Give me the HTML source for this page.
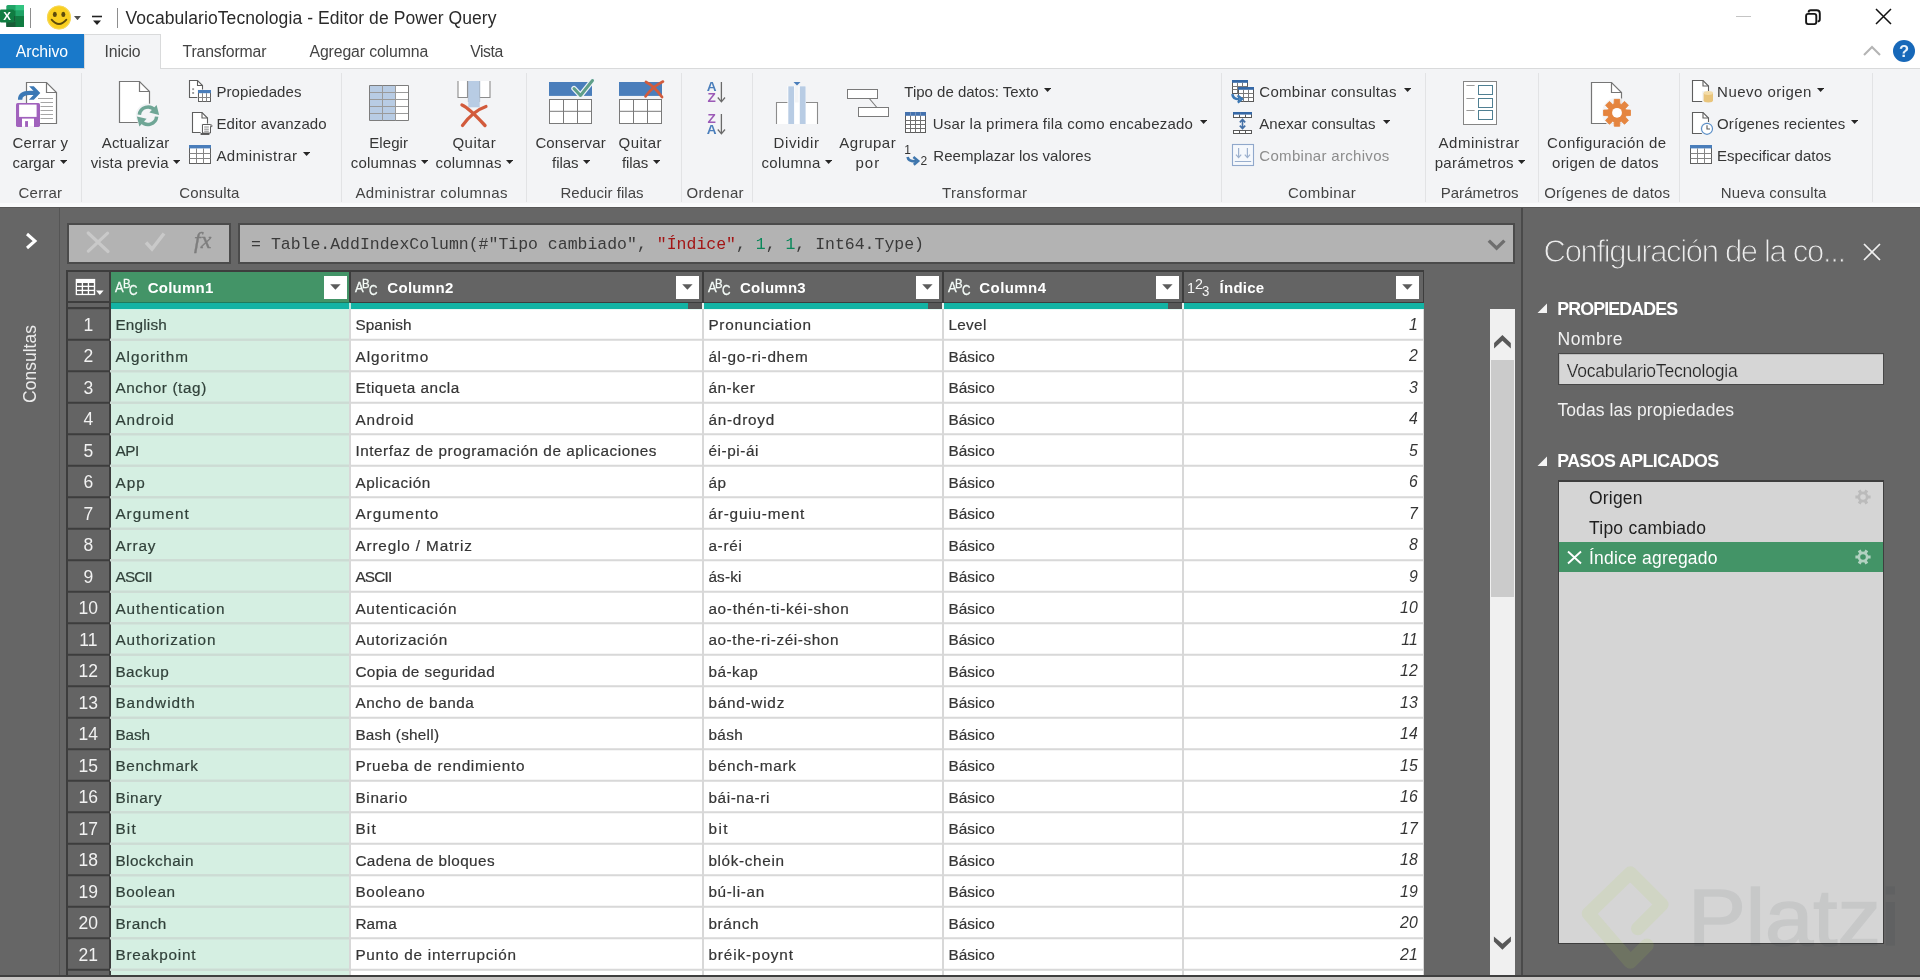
<!DOCTYPE html>
<html lang="es"><head><meta charset="utf-8"><title>VocabularioTecnologia - Editor de Power Query</title>
<style>
html,body{margin:0;padding:0;}
body{width:1920px;height:980px;overflow:hidden;position:relative;background:#666666;font-family:"Liberation Sans",sans-serif;}
#app{position:absolute;left:0;top:0;width:1920px;height:980px;overflow:hidden;will-change:transform;}
#app div,#app span,#app svg{position:absolute;}
#app span{white-space:nowrap;display:block;}
.m{font-family:"Liberation Mono","DejaVu Sans Mono",monospace;}
</style></head><body><div id="app">
<div style="left:0px;top:0px;width:1920px;height:34px;background:#ffffff;"></div>
<div style="left:0px;top:34px;width:1920px;height:34px;background:#ffffff;"></div>
<div style="left:0px;top:68px;width:1920px;height:139px;background:#f3f4f6;border-top:1px solid #d9dadb;box-sizing:border-box;"></div>
<div style="left:0px;top:207px;width:1920px;height:773px;background:#666666;"></div>
<div style="left:0px;top:203px;width:1920px;height:4px;background:#f9fafb;"></div>
<div style="left:0px;top:207px;width:1920px;height:1px;background:#575757;"></div>
<div style="left:59px;top:208px;width:1px;height:767px;background:#555555;"></div>
<div style="left:0px;top:975px;width:1920px;height:2px;background:#3f3f3f;"></div>
<div style="left:0px;top:977px;width:1920px;height:3px;background:#c9c7c5;"></div>
<div style="left:1521px;top:208px;width:2px;height:767px;background:#4a4a4a;"></div>
<span style="left:125.50px;top:10.19px;font-size:17.5px;line-height:17.5px;color:#2a2a2a;letter-spacing:0.075px;">VocabularioTecnologia - Editor de Power Query</span>
<svg style="left:0px;top:4px;" width="26" height="24" viewBox="0 0 26 24"><rect x="6.3" y="1" width="17.7" height="22" rx="1.5" fill="#21a366"/><rect x="15.5" y="1" width="8.5" height="5.5" fill="#33c481"/><rect x="15.5" y="6.5" width="8.5" height="5.5" fill="#21a366"/><rect x="15.5" y="12" width="8.5" height="5.5" fill="#107c41"/><rect x="6.3" y="12" width="9.2" height="5.5" fill="#185c37"/><rect x="6.3" y="17.5" width="17.7" height="5.5" fill="#185c37"/><rect x="15.5" y="17.5" width="8.5" height="5.5" fill="#107c41"/><rect x="6.3" y="6.5" width="9.2" height="5.5" fill="#107c41"/><rect x="0" y="5.5" width="14" height="13" rx="1" fill="#107c41"/><text x="7" y="16.3" font-family="Liberation Sans, sans-serif" font-weight="700" font-size="11.5" fill="#ffffff" text-anchor="middle">X</text></svg>
<div style="left:30px;top:8px;width:1px;height:20px;background:#8e8e8e;"></div>
<svg style="left:46px;top:5px;" width="26" height="26" viewBox="0 0 26 26"><circle cx="13" cy="12.5" r="11.7" fill="#f9cf20"/><circle cx="13" cy="12.5" r="11.5" fill="none" stroke="#f6d859" stroke-width="1.2"/><ellipse cx="8.8" cy="9.4" rx="2" ry="2.6" fill="#5d4b0c"/><ellipse cx="17.3" cy="9.4" rx="2" ry="2.6" fill="#5d4b0c"/><path d="M5.6 14.6 Q13 23.4 20.4 14.6" fill="none" stroke="#5d4b0c" stroke-width="1.8" stroke-linecap="round"/></svg>
<svg style="left:73.8px;top:16.1px;" width="7" height="4.2" viewBox="0 0 7 4.2"><path d="M0 0 L7 0 L3.5 4.2 Z" fill="#505050"/></svg>
<svg style="left:90.6px;top:14.9px;" width="12" height="12" viewBox="0 0 12 12"><path d="M1 1.5 H11" stroke="#222" stroke-width="1.6"/><path d="M2 5.5 L10 5.5 L6 10 Z" fill="#222"/></svg>
<div style="left:117px;top:8px;width:1px;height:20px;background:#8e8e8e;"></div>
<div style="left:1736px;top:16px;width:15px;height:1px;background:#c4c4c4;"></div>
<svg style="left:1803px;top:7.6px;" width="19" height="19" viewBox="0 0 19 19"><path d="M5.6 4.4 Q5.6 2.2 7.8 2.2 H13.6 Q16.8 2.2 16.8 5.4 V11.2 Q16.8 13.4 14.6 13.4" fill="none" stroke="#151515" stroke-width="1.9"/><rect x="3.1" y="5.9" width="10.2" height="10.2" rx="2" fill="#fff" stroke="#151515" stroke-width="1.9"/></svg>
<svg style="left:1874px;top:7px;" width="20" height="20" viewBox="0 0 20 20"><path d="M2 2 L17 17 M17 2 L2 17" fill="none" stroke="#111" stroke-width="1.5"/></svg>
<svg style="left:1862px;top:44px;" width="20" height="12" viewBox="0 0 20 12"><path d="M2 11 L10 3 L18 11" fill="none" stroke="#b4b4b4" stroke-width="2.1"/></svg>
<svg style="left:1892px;top:39px;" width="24" height="24" viewBox="0 0 24 24"><circle cx="12" cy="12" r="11" fill="#1768b9"/><text x="12" y="17.8" font-family="Liberation Sans, sans-serif" font-size="16.5" font-weight="700" fill="#e8f2fb" text-anchor="middle">?</text></svg>
<div style="left:0px;top:34px;width:84px;height:34px;background:#1979ca;"></div>
<div style="left:84px;top:34px;width:77px;height:35px;background:#f3f4f6;border:1px solid #d9dadb;border-bottom:none;box-sizing:border-box;"></div>
<span style="left:15.80px;top:43.63px;font-size:15.8px;line-height:15.8px;color:#ffffff;letter-spacing:-0.064px;">Archivo</span>
<span style="left:104.60px;top:43.63px;font-size:15.8px;line-height:15.8px;color:#444444;letter-spacing:-0.177px;">Inicio</span>
<span style="left:182.50px;top:43.63px;font-size:15.8px;line-height:15.8px;color:#444444;letter-spacing:-0.145px;">Transformar</span>
<span style="left:309.50px;top:43.63px;font-size:15.8px;line-height:15.8px;color:#444444;letter-spacing:-0.116px;">Agregar columna</span>
<span style="left:470.20px;top:43.63px;font-size:15.8px;line-height:15.8px;color:#444444;letter-spacing:-0.460px;">Vista</span>
<div style="left:81px;top:73px;width:1px;height:129px;background:#e2e3e5;"></div>
<div style="left:341px;top:73px;width:1px;height:129px;background:#e2e3e5;"></div>
<div style="left:526px;top:73px;width:1px;height:129px;background:#e2e3e5;"></div>
<div style="left:681px;top:73px;width:1px;height:129px;background:#e2e3e5;"></div>
<div style="left:752px;top:73px;width:1px;height:129px;background:#e2e3e5;"></div>
<div style="left:1221px;top:73px;width:1px;height:129px;background:#e2e3e5;"></div>
<div style="left:1425px;top:73px;width:1px;height:129px;background:#e2e3e5;"></div>
<div style="left:1538px;top:73px;width:1px;height:129px;background:#e2e3e5;"></div>
<div style="left:1679px;top:73px;width:1px;height:129px;background:#e2e3e5;"></div>
<div style="left:1872px;top:73px;width:1px;height:129px;background:#e2e3e5;"></div>
<span style="left:18.60px;top:184.60px;font-size:15px;line-height:15px;color:#444444;letter-spacing:0.179px;">Cerrar</span>
<span style="left:179.30px;top:184.60px;font-size:15px;line-height:15px;color:#444444;letter-spacing:0.114px;">Consulta</span>
<span style="left:355.40px;top:184.60px;font-size:15px;line-height:15px;color:#444444;letter-spacing:0.410px;">Administrar columnas</span>
<span style="left:560.40px;top:184.60px;font-size:15px;line-height:15px;color:#444444;letter-spacing:0.056px;">Reducir filas</span>
<span style="left:686.40px;top:184.60px;font-size:15px;line-height:15px;color:#444444;letter-spacing:0.362px;">Ordenar</span>
<span style="left:942.00px;top:184.60px;font-size:15px;line-height:15px;color:#444444;letter-spacing:0.377px;">Transformar</span>
<span style="left:1287.90px;top:184.60px;font-size:15px;line-height:15px;color:#444444;letter-spacing:0.396px;">Combinar</span>
<span style="left:1440.70px;top:184.60px;font-size:15px;line-height:15px;color:#444444;letter-spacing:0.041px;">Parámetros</span>
<span style="left:1544.30px;top:184.60px;font-size:15px;line-height:15px;color:#444444;letter-spacing:0.143px;">Orígenes de datos</span>
<span style="left:1720.70px;top:184.60px;font-size:15px;line-height:15px;color:#444444;letter-spacing:0.177px;">Nueva consulta</span>
<span style="left:12.60px;top:134.60px;font-size:15px;line-height:15px;color:#363636;letter-spacing:0.161px;">Cerrar y</span>
<span style="left:12.60px;top:155.30px;font-size:15px;line-height:15px;color:#363636;letter-spacing:-0.024px;">cargar</span>
<svg style="left:60px;top:160.2px;" width="7.2" height="4" viewBox="0 0 7.2 4"><path d="M0 0 L7.2 0 L3.6 4 Z" fill="#262626"/></svg>
<span style="left:101.70px;top:134.60px;font-size:15px;line-height:15px;color:#363636;letter-spacing:0.193px;">Actualizar</span>
<span style="left:90.70px;top:155.30px;font-size:15px;line-height:15px;color:#363636;letter-spacing:0.185px;">vista previa</span>
<svg style="left:173.1px;top:160.2px;" width="7.2" height="4" viewBox="0 0 7.2 4"><path d="M0 0 L7.2 0 L3.6 4 Z" fill="#262626"/></svg>
<span style="left:369.30px;top:134.60px;font-size:15px;line-height:15px;color:#363636;letter-spacing:0.050px;">Elegir</span>
<span style="left:350.70px;top:155.30px;font-size:15px;line-height:15px;color:#363636;letter-spacing:0.214px;">columnas</span>
<svg style="left:421px;top:160.2px;" width="7.2" height="4" viewBox="0 0 7.2 4"><path d="M0 0 L7.2 0 L3.6 4 Z" fill="#262626"/></svg>
<span style="left:452.40px;top:134.60px;font-size:15px;line-height:15px;color:#363636;letter-spacing:0.490px;">Quitar</span>
<span style="left:435.40px;top:155.30px;font-size:15px;line-height:15px;color:#363636;letter-spacing:0.257px;">columnas</span>
<svg style="left:505.8px;top:160.2px;" width="7.2" height="4" viewBox="0 0 7.2 4"><path d="M0 0 L7.2 0 L3.6 4 Z" fill="#262626"/></svg>
<span style="left:535.40px;top:134.60px;font-size:15px;line-height:15px;color:#363636;letter-spacing:0.138px;">Conservar</span>
<span style="left:552.10px;top:155.30px;font-size:15px;line-height:15px;color:#363636;letter-spacing:-0.044px;">filas</span>
<svg style="left:583.3px;top:160.2px;" width="7.2" height="4" viewBox="0 0 7.2 4"><path d="M0 0 L7.2 0 L3.6 4 Z" fill="#262626"/></svg>
<span style="left:618.60px;top:134.60px;font-size:15px;line-height:15px;color:#363636;letter-spacing:0.390px;">Quitar</span>
<span style="left:621.90px;top:155.30px;font-size:15px;line-height:15px;color:#363636;letter-spacing:-0.069px;">filas</span>
<svg style="left:653.1px;top:160.2px;" width="7.2" height="4" viewBox="0 0 7.2 4"><path d="M0 0 L7.2 0 L3.6 4 Z" fill="#262626"/></svg>
<span style="left:773.60px;top:134.60px;font-size:15px;line-height:15px;color:#363636;letter-spacing:0.605px;">Dividir</span>
<span style="left:761.40px;top:155.30px;font-size:15px;line-height:15px;color:#363636;letter-spacing:0.384px;">columna</span>
<svg style="left:825px;top:160.2px;" width="7.2" height="4" viewBox="0 0 7.2 4"><path d="M0 0 L7.2 0 L3.6 4 Z" fill="#262626"/></svg>
<span style="left:839.30px;top:134.60px;font-size:15px;line-height:15px;color:#363636;letter-spacing:0.505px;">Agrupar</span>
<span style="left:855.40px;top:155.30px;font-size:15px;line-height:15px;color:#363636;letter-spacing:1.110px;">por</span>
<span style="left:1438.60px;top:134.60px;font-size:15px;line-height:15px;color:#363636;letter-spacing:0.485px;">Administrar</span>
<span style="left:1434.70px;top:155.30px;font-size:15px;line-height:15px;color:#363636;letter-spacing:0.337px;">parámetros</span>
<svg style="left:1517.9px;top:160.2px;" width="7.2" height="4" viewBox="0 0 7.2 4"><path d="M0 0 L7.2 0 L3.6 4 Z" fill="#262626"/></svg>
<span style="left:1547.10px;top:134.60px;font-size:15px;line-height:15px;color:#363636;letter-spacing:0.366px;">Configuración de</span>
<span style="left:1552.10px;top:155.30px;font-size:15px;line-height:15px;color:#363636;letter-spacing:0.220px;">origen de datos</span>
<span style="left:216.40px;top:83.90px;font-size:15px;line-height:15px;color:#363636;letter-spacing:0.077px;">Propiedades</span>
<span style="left:216.40px;top:116.00px;font-size:15px;line-height:15px;color:#363636;letter-spacing:0.135px;">Editor avanzado</span>
<span style="left:216.40px;top:147.90px;font-size:15px;line-height:15px;color:#363636;letter-spacing:0.475px;">Administrar</span>
<svg style="left:302.6px;top:152.0px;" width="7.2" height="4" viewBox="0 0 7.2 4"><path d="M0 0 L7.2 0 L3.6 4 Z" fill="#262626"/></svg>
<span style="left:904.30px;top:83.90px;font-size:15px;line-height:15px;color:#363636;">Tipo de datos: Texto</span>
<svg style="left:1043.7px;top:88.0px;" width="7.2" height="4" viewBox="0 0 7.2 4"><path d="M0 0 L7.2 0 L3.6 4 Z" fill="#262626"/></svg>
<span style="left:932.70px;top:116.00px;font-size:15px;line-height:15px;color:#363636;letter-spacing:0.216px;">Usar la primera fila como encabezado</span>
<svg style="left:1200px;top:120.1px;" width="7.2" height="4" viewBox="0 0 7.2 4"><path d="M0 0 L7.2 0 L3.6 4 Z" fill="#262626"/></svg>
<span style="left:933.30px;top:147.90px;font-size:15px;line-height:15px;color:#363636;letter-spacing:0.055px;">Reemplazar los valores</span>
<span style="left:1259.30px;top:83.90px;font-size:15px;line-height:15px;color:#363636;letter-spacing:0.267px;">Combinar consultas</span>
<svg style="left:1403.8px;top:88.0px;" width="7.2" height="4" viewBox="0 0 7.2 4"><path d="M0 0 L7.2 0 L3.6 4 Z" fill="#262626"/></svg>
<span style="left:1259.30px;top:116.00px;font-size:15px;line-height:15px;color:#363636;letter-spacing:0.069px;">Anexar consultas</span>
<svg style="left:1382.8px;top:120.1px;" width="7.2" height="4" viewBox="0 0 7.2 4"><path d="M0 0 L7.2 0 L3.6 4 Z" fill="#262626"/></svg>
<span style="left:1259.30px;top:147.90px;font-size:15px;line-height:15px;color:#8c8c8c;letter-spacing:0.309px;">Combinar archivos</span>
<span style="left:1717.10px;top:83.90px;font-size:15px;line-height:15px;color:#363636;letter-spacing:0.461px;">Nuevo origen</span>
<svg style="left:1817px;top:88.0px;" width="7.2" height="4" viewBox="0 0 7.2 4"><path d="M0 0 L7.2 0 L3.6 4 Z" fill="#262626"/></svg>
<span style="left:1717.10px;top:116.00px;font-size:15px;line-height:15px;color:#363636;letter-spacing:0.086px;">Orígenes recientes</span>
<svg style="left:1851.2px;top:120.1px;" width="7.2" height="4" viewBox="0 0 7.2 4"><path d="M0 0 L7.2 0 L3.6 4 Z" fill="#262626"/></svg>
<span style="left:1717.10px;top:147.90px;font-size:15px;line-height:15px;color:#363636;">Especificar datos</span>
<svg style="left:14px;top:80px;" width="46" height="48" viewBox="0 0 46 48"><path d="M12.5 2.5 H32.5 L42.5 12.5 V43.5 H12.5 Z" fill="#ffffff" stroke="#767676" stroke-width="1.2"/><path d="M32.5 2.5 V12.5 H42.5" fill="none" stroke="#767676" stroke-width="1.2"/><path d="M24 18.5 H39" stroke="#a6a6a6" stroke-width="1"/><path d="M26.5 22.5 H39" stroke="#a6a6a6" stroke-width="1"/><path d="M26.5 26.5 H39" stroke="#a6a6a6" stroke-width="1"/><path d="M26.5 30.5 H39" stroke="#a6a6a6" stroke-width="1"/><path d="M26.5 34.5 H39" stroke="#a6a6a6" stroke-width="1"/><path d="M26.5 38.5 H39" stroke="#a6a6a6" stroke-width="1"/><path d="M6.1 19.7 Q6.1 12.9 16 12.9 H22" fill="none" stroke="#3b78b5" stroke-width="4.3"/><polygon points="15.1,6.3 19.8,6.3 26.3,12.9 19.8,19.7 14.9,19.7 21.4,12.9" fill="#3b78b5"/><rect x="2" y="22.9" width="24" height="24" rx="1.6" fill="#a162bd"/><rect x="5.1" y="24.6" width="17.5" height="12.3" fill="#ffffff"/><rect x="8" y="38.6" width="12" height="8.3" fill="#ffffff"/><rect x="11.1" y="41.1" width="2.9" height="5.8" fill="#a162bd"/></svg>
<svg style="left:118px;top:80px;" width="46" height="48" viewBox="0 0 46 48"><path d="M1.5 1.5 H21.5 L31.5 11.5 V42.5 H1.5 Z" fill="#ffffff" stroke="#767676" stroke-width="1.2"/><path d="M21.5 1.5 V11.5 H31.5" fill="none" stroke="#767676" stroke-width="1.2"/><circle cx="30" cy="35.7" r="12.3" fill="#f3f4f6"/><path d="M21.35 34.79 A8.7 8.7 0 0 1 36.86 30.34" fill="none" stroke="#6fa696" stroke-width="3.5"/><path d="M38.65 36.61 A8.7 8.7 0 0 1 23.14 41.06" fill="none" stroke="#6fa696" stroke-width="3.5"/><path d="M38.6 24.9 L41.1 34.9 L31.4 32.6 Z" fill="#6fa696"/><path d="M21.4 46.5 L18.9 36.5 L28.6 38.8 Z" fill="#6fa696"/></svg>
<svg style="left:188px;top:79px;" width="25" height="25" viewBox="0 0 25 25"><path d="M1.5 1.5 H9.5 L14.5 6.5 V18.5 H1.5 Z" fill="#ffffff" stroke="#5e5e5e" stroke-width="1.1"/><path d="M9.5 1.5 V6.5 H14.5" fill="none" stroke="#5e5e5e" stroke-width="1.1"/><rect x="4.2" y="9.2" width="1.9" height="1.9" fill="#9a9a9a"/><rect x="4.2" y="13" width="1.9" height="1.9" fill="#9a9a9a"/><rect x="9.4" y="10.5" width="14.6" height="13" fill="#f3f4f6"/><rect x="10.5" y="11.5" width="12" height="11" fill="#ffffff" stroke="#606060" stroke-width="1"/><rect x="10.0" y="11.0" width="13" height="3.2" fill="#4a7ebb"/><path d="M14.5 14.2 V22.5" stroke="#858585" stroke-width="1"/><path d="M18.5 14.2 V22.5" stroke="#858585" stroke-width="1"/><path d="M10.5 18.5 H22.5" stroke="#858585" stroke-width="1"/></svg>
<svg style="left:191px;top:111px;" width="24" height="25" viewBox="0 0 24 25"><path d="M1.5 1.5 H11.0 L16.5 7.0 V21.5 H1.5 Z" fill="#ffffff" stroke="#5e5e5e" stroke-width="1.1"/><path d="M11.0 1.5 V7.0 H16.5" fill="none" stroke="#5e5e5e" stroke-width="1.1"/><rect x="9.6" y="12.6" width="12.4" height="11.8" fill="#f3f4f6"/><path d="M11.5 13.5 H19.5 V22 H11.5 Z" fill="#ffffff" stroke="#5e5e5e" stroke-width="1"/><path d="M13.2 16 H17.8 M13.2 18.2 H17.8 M13.2 20.2 H17.8" stroke="#7a7a7a" stroke-width="0.9"/><path d="M9.6 23 H18.4" stroke="#4e4e4e" stroke-width="1.8"/><path d="M19.5 13.5 Q21.4 13.6 21 15.6 L19.5 15.6" fill="#ffffff" stroke="#5e5e5e" stroke-width="0.9"/></svg>
<svg style="left:188px;top:144px;" width="24" height="21" viewBox="0 0 24 21"><rect x="1.5" y="1.5" width="21" height="18" fill="#ffffff" stroke="#606060" stroke-width="1"/><rect x="1.0" y="1.0" width="22" height="3.4" fill="#4a7ebb"/><path d="M8.5 4.4 V19.5" stroke="#858585" stroke-width="1"/><path d="M15.5 4.4 V19.5" stroke="#858585" stroke-width="1"/><path d="M1.5 9.5 H22.5" stroke="#858585" stroke-width="1"/><path d="M1.5 14.5 H22.5" stroke="#858585" stroke-width="1"/></svg>
<svg style="left:1689px;top:144px;" width="24" height="21" viewBox="0 0 24 21"><rect x="1.5" y="1.5" width="21" height="18" fill="#ffffff" stroke="#606060" stroke-width="1"/><rect x="1.0" y="1.0" width="22" height="3.4" fill="#4a7ebb"/><path d="M8.5 4.4 V19.5" stroke="#858585" stroke-width="1"/><path d="M15.5 4.4 V19.5" stroke="#858585" stroke-width="1"/><path d="M1.5 9.5 H22.5" stroke="#858585" stroke-width="1"/><path d="M1.5 14.5 H22.5" stroke="#858585" stroke-width="1"/></svg>
<svg style="left:368px;top:84px;" width="42" height="38" viewBox="0 0 42 38"><rect x="1.5" y="1.5" width="39" height="35" fill="#ffffff"/><rect x="1.5" y="1.5" width="26" height="35" fill="#b8cce4"/><path d="M1.5 1.5 H40.5" stroke="#7d7d7d" stroke-width="1"/><path d="M1.5 8.5 H40.5" stroke="#9a9a9a" stroke-width="1"/><path d="M1.5 15.5 H40.5" stroke="#9a9a9a" stroke-width="1"/><path d="M1.5 22.5 H40.5" stroke="#9a9a9a" stroke-width="1"/><path d="M1.5 29.5 H40.5" stroke="#9a9a9a" stroke-width="1"/><path d="M1.5 36.5 H40.5" stroke="#7d7d7d" stroke-width="1"/><path d="M1.5 1.5 V36.5" stroke="#7d7d7d" stroke-width="1"/><path d="M14.5 1.5 V36.5" stroke="#9a9a9a" stroke-width="1"/><path d="M27.5 1.5 V36.5" stroke="#9a9a9a" stroke-width="1"/><path d="M40.5 1.5 V36.5" stroke="#7d7d7d" stroke-width="1"/></svg>
<svg style="left:456px;top:80px;" width="38" height="48" viewBox="0 0 38 48"><path d="M2 1 V17.5 H11.5 V1 M23.5 1 V17.5 H34 V1" fill="#ffffff" stroke="#8c8c8c" stroke-width="1.1"/><rect x="12.3" y="1" width="11.4" height="26.3" fill="#b8cce4"/><path d="M12.3 1 V22 M23.7 1 V22" stroke="#a9b9cc" stroke-width="0.8"/><path d="M6 25 Q13 28 29 45.5" fill="none" stroke="#d25b3c" stroke-width="3.4" stroke-linecap="round"/><path d="M30 26.5 Q17 31 6.5 45.5" fill="none" stroke="#d25b3c" stroke-width="3.2" stroke-linecap="round"/></svg>
<svg style="left:548px;top:77px;" width="48" height="49" viewBox="0 0 48 49"><rect x="1" y="5" width="43" height="13.9" fill="#4a7ebb"/><rect x="1.5" y="22.5" width="42" height="24" fill="#ffffff" stroke="#7a7a7a" stroke-width="1"/><path d="M15.5 22.5 V46.5 M29.5 22.5 V46.5 M1.5 34.3 H43.5" stroke="#7a7a7a" stroke-width="1"/><path d="M26 11.5 L32.5 18.5 L44.5 3.5" fill="none" stroke="#eef3f8" stroke-width="5.4" stroke-linecap="round" stroke-linejoin="round"/><path d="M26 11.5 L32.5 18.5 L44.5 3.5" fill="none" stroke="#5f9f88" stroke-width="3" stroke-linecap="round" stroke-linejoin="round"/></svg>
<svg style="left:618px;top:77px;" width="48" height="49" viewBox="0 0 48 49"><rect x="1" y="5" width="43" height="13.9" fill="#4a7ebb"/><rect x="1.5" y="22.5" width="42" height="24" fill="#ffffff" stroke="#7a7a7a" stroke-width="1"/><path d="M15.5 22.5 V46.5 M29.5 22.5 V46.5 M1.5 34.3 H43.5" stroke="#7a7a7a" stroke-width="1"/><path d="M28 5 Q36 9 44 20" fill="none" stroke="#d25b3c" stroke-width="2.8" stroke-linecap="round"/><path d="M45 4.5 Q34 10 27.5 19.5" fill="none" stroke="#d25b3c" stroke-width="2.6" stroke-linecap="round"/></svg>
<svg style="left:706px;top:79.5px;" width="22" height="24" viewBox="0 0 22 24"><text x="5.6" y="11" font-family="Liberation Sans, sans-serif" font-weight="700" font-size="13.6" fill="#4a7ebb" text-anchor="middle">A</text><text x="5.6" y="22" font-family="Liberation Sans, sans-serif" font-weight="700" font-size="13.6" fill="#9b59b6" text-anchor="middle">Z</text><path d="M15.4 2 V21.5 M11.8 17.5 L15.4 21.8 L19 17.5" fill="none" stroke="#6a6a6a" stroke-width="1.3"/></svg>
<svg style="left:706px;top:111.5px;" width="22" height="24" viewBox="0 0 22 24"><text x="5.6" y="11" font-family="Liberation Sans, sans-serif" font-weight="700" font-size="13.6" fill="#9b59b6" text-anchor="middle">Z</text><text x="5.6" y="22" font-family="Liberation Sans, sans-serif" font-weight="700" font-size="13.6" fill="#4a7ebb" text-anchor="middle">A</text><path d="M15.4 2 V21.5 M11.8 17.5 L15.4 21.8 L19 17.5" fill="none" stroke="#6a6a6a" stroke-width="1.3"/></svg>
<svg style="left:774px;top:80px;" width="46" height="46" viewBox="0 0 46 46"><rect x="2.5" y="22.5" width="41" height="21.5" fill="#ffffff"/><path d="M2.5 44 V22.5 H13.8 M32 22.5 H43.5 V44" fill="none" stroke="#8c8c8c" stroke-width="1.1"/><rect x="13.5" y="6" width="7.4" height="38" fill="#ffffff"/><rect x="24.6" y="6" width="7.4" height="38" fill="#ffffff"/><rect x="14.3" y="6.3" width="5.8" height="37.7" fill="#b8cce4"/><rect x="25.8" y="6.3" width="5.8" height="37.7" fill="#b8cce4"/><path d="M19.5 2 H26.5 L23 5.6 Z" fill="#4a7ebb"/></svg>
<svg style="left:845px;top:86px;" width="46" height="34" viewBox="0 0 46 34"><rect x="2.5" y="3.5" width="30" height="9" fill="#ffffff" stroke="#7a7a7a" stroke-width="1"/><rect x="13.5" y="21.5" width="30" height="9" fill="#ffffff" stroke="#7a7a7a" stroke-width="1"/><path d="M24.3 12.5 L31.9 21.5" stroke="#7a7a7a" stroke-width="1.1"/></svg>
<svg style="left:904px;top:111px;" width="24" height="23" viewBox="0 0 24 23"><rect x="1.5" y="1.5" width="20" height="20" fill="#ffffff" stroke="#5c5c5c" stroke-width="1"/><rect x="1" y="1" width="21" height="3.8" fill="#4472ae"/><path d="M6.5 4.8 V21.5" stroke="#707070" stroke-width="1"/><path d="M6.5 1.2 V4.2" stroke="#7f9cc6" stroke-width="0.9"/><path d="M11.5 4.8 V21.5" stroke="#707070" stroke-width="1"/><path d="M11.5 1.2 V4.2" stroke="#7f9cc6" stroke-width="0.9"/><path d="M16.5 4.8 V21.5" stroke="#707070" stroke-width="1"/><path d="M16.5 1.2 V4.2" stroke="#7f9cc6" stroke-width="0.9"/><path d="M1.5 9.5 H21.5" stroke="#707070" stroke-width="1"/><path d="M1.5 13.5 H21.5" stroke="#707070" stroke-width="1"/><path d="M1.5 17.5 H21.5" stroke="#707070" stroke-width="1"/></svg>
<svg style="left:903px;top:144px;" width="26" height="24" viewBox="0 0 26 24"><text x="1.2" y="9.7" font-family="Liberation Sans, sans-serif" font-size="12" fill="#333333">1</text><text x="17.5" y="20.8" font-family="Liberation Sans, sans-serif" font-size="12" fill="#333333">2</text><path d="M4.6 13 Q5.6 18 13.6 17.2" fill="none" stroke="#3f76ad" stroke-width="2.7"/><path d="M10.4 13 L15.2 17 L10.8 20.8" fill="none" stroke="#3f76ad" stroke-width="2.5"/></svg>
<svg style="left:1230px;top:79px;" width="25" height="26" viewBox="0 0 25 26"><rect x="2.5" y="1.5" width="15" height="13" fill="#ffffff" stroke="#585858" stroke-width="1"/><rect x="2.0" y="1.0" width="16" height="2.8" fill="#3568a6"/><path d="M7.5 3.8 V14.5" stroke="#7a7a7a" stroke-width="1"/><path d="M12.5 3.8 V14.5" stroke="#7a7a7a" stroke-width="1"/><path d="M2.5 7.5 H17.5" stroke="#7a7a7a" stroke-width="1"/><path d="M2.5 10.5 H17.5" stroke="#7a7a7a" stroke-width="1"/><rect x="8.5" y="8.5" width="15" height="14" fill="#ffffff" stroke="#585858" stroke-width="1"/><rect x="8.0" y="8.0" width="16" height="2.8" fill="#3568a6"/><path d="M13.5 10.8 V22.5" stroke="#7a7a7a" stroke-width="1"/><path d="M18.5 10.8 V22.5" stroke="#7a7a7a" stroke-width="1"/><path d="M8.5 14.5 H23.5" stroke="#7a7a7a" stroke-width="1"/><path d="M8.5 18.5 H23.5" stroke="#7a7a7a" stroke-width="1"/><rect x="0" y="15.2" width="8" height="10" fill="#f3f4f6"/><path d="M2.4 15.2 Q3 20.6 9.8 20.2" fill="none" stroke="#3b78b5" stroke-width="2.6"/><path d="M7.6 16.4 L12 20.1 L7.8 23.7" fill="none" stroke="#3b78b5" stroke-width="2.3"/></svg>
<svg style="left:1231px;top:111px;" width="24" height="24" viewBox="0 0 24 24"><rect x="2.5" y="1.5" width="18" height="5" fill="#ffffff" stroke="#585858" stroke-width="1"/><rect x="2" y="1" width="19" height="2.6" fill="#3568a6"/><path d="M8.5 3.6 V6.5 M14.5 3.6 V6.5" stroke="#585858" stroke-width="1"/><rect x="2.5" y="19.5" width="18" height="3" fill="#ffffff" stroke="#585858" stroke-width="1"/><path d="M8.5 19.5 V22.5 M14.5 19.5 V22.5" stroke="#585858" stroke-width="1"/><path d="M11.5 9 V17 M8.8 11.4 L11.5 8.4 L14.2 11.4 M8.8 14.6 L11.5 17.6 L14.2 14.6" fill="none" stroke="#4470a6" stroke-width="1.6"/></svg>
<svg style="left:1231px;top:143px;" width="24" height="24" viewBox="0 0 24 24"><rect x="1.5" y="1.5" width="21" height="21" fill="#f5f8fc" stroke="#90a8cb" stroke-width="1.1"/><path d="M3.8 18.5 H20.2" stroke="#98aecd" stroke-width="1"/><path d="M7.6 5 V14.4 M5 11.6 L7.6 14.6 L10.2 11.6 M16.4 5 V14.4 M13.8 11.6 L16.4 14.6 L19 11.6" fill="none" stroke="#9db1ce" stroke-width="1.2"/></svg>
<svg style="left:1462px;top:80px;" width="37" height="46" viewBox="0 0 37 46"><rect x="1.5" y="1.5" width="33" height="43" fill="#ffffff" stroke="#858585" stroke-width="1"/><rect x="16.5" y="5.5" width="14" height="9" fill="#ffffff" stroke="#4f7f92" stroke-width="1"/><path d="M4.4 5.5 H12.6" stroke="#9a9a9a" stroke-width="1"/><rect x="16.5" y="18.5" width="14" height="9" fill="#ffffff" stroke="#4f7f92" stroke-width="1"/><path d="M4.4 18.5 H12.6" stroke="#9a9a9a" stroke-width="1"/><rect x="16.5" y="30.5" width="14" height="9" fill="#ffffff" stroke="#4f7f92" stroke-width="1"/><path d="M4.4 30.5 H12.6" stroke="#9a9a9a" stroke-width="1"/></svg>
<svg style="left:1590px;top:80px;" width="44" height="48" viewBox="0 0 44 48"><path d="M1.5 2.5 H21.5 L31.5 12.5 V43.5 H1.5 Z" fill="#ffffff" stroke="#767676" stroke-width="1.2"/><path d="M21.5 2.5 V12.5 H31.5" fill="none" stroke="#767676" stroke-width="1.2"/><circle cx="27" cy="32.8" r="15" fill="#f3f4f6" opacity="0.9"/><polygon points="24.28,19.37 29.72,19.37 29.87,23.85 31.30,24.44 34.57,21.38 38.42,25.23 35.36,28.50 35.95,29.93 40.43,30.08 40.43,35.52 35.95,35.67 35.36,37.10 38.42,40.37 34.57,44.22 31.30,41.16 29.87,41.75 29.72,46.23 24.28,46.23 24.13,41.75 22.70,41.16 19.43,44.22 15.58,40.37 18.64,37.10 18.05,35.67 13.57,35.52 13.57,30.08 18.05,29.93 18.64,28.50 15.58,25.23 19.43,21.38 22.70,24.44 24.13,23.85" fill="#e5853f" stroke="#e5853f" stroke-width="0.9" stroke-linejoin="round"/><circle cx="27" cy="32.8" r="4.9" fill="#ffffff"/></svg>
<svg style="left:1690px;top:79px;" width="25" height="25" viewBox="0 0 25 25"><path d="M2.5 1.5 H13.0 L18.5 7.0 V22.5 H2.5 Z" fill="#ffffff" stroke="#5e5e5e" stroke-width="1.1"/><path d="M13.0 1.5 V7.0 H18.5" fill="none" stroke="#5e5e5e" stroke-width="1.1"/><rect x="12.2" y="12" width="11.2" height="12" fill="#f3f4f6"/><path d="M13.6 14 V21.6 Q18.3 24.4 23 21.6 V14 Z" fill="#e9c57c"/><ellipse cx="18.3" cy="14" rx="4.7" ry="1.9" fill="#f3dca8"/><ellipse cx="18.3" cy="21.6" rx="4.7" ry="1.9" fill="#e9c57c"/></svg>
<svg style="left:1690px;top:111px;" width="25" height="26" viewBox="0 0 25 26"><path d="M2.5 1.5 H13.0 L18.5 7.0 V22.5 H2.5 Z" fill="#ffffff" stroke="#5e5e5e" stroke-width="1.1"/><path d="M13.0 1.5 V7.0 H18.5" fill="none" stroke="#5e5e5e" stroke-width="1.1"/><circle cx="17" cy="17.8" r="7" fill="#f3f4f6"/><circle cx="17" cy="17.8" r="5.5" fill="#ffffff" stroke="#5b8fc7" stroke-width="1.2"/><path d="M17 14.2 V18 H20" fill="none" stroke="#5a5a5a" stroke-width="1.1"/></svg>
<svg style="left:24px;top:232px;" width="14" height="18" viewBox="0 0 14 18"><path d="M3 2 L11 9 L3 16" fill="none" stroke="#ffffff" stroke-width="3"/></svg>
<span style="left:-20px;top:354px;width:100px;height:20px;text-align:center;font-size:17.5px;line-height:20px;color:#ececec;transform:rotate(-90deg);transform-origin:50% 50%;">Consultas</span>
<div style="left:67px;top:223px;width:164px;height:41px;background:#b3b3b3;border:2px solid #4b4b4b;box-sizing:border-box;"></div>
<div style="left:238px;top:223px;width:1277px;height:41px;background:#b3b3b3;border:2px solid #4b4b4b;box-sizing:border-box;"></div>
<svg style="left:86px;top:231px;" width="24" height="23" viewBox="0 0 24 23"><path d="M2.2 2 L22 20.5 M21.6 2.2 L2.4 20.2" fill="none" stroke="#c9c9c9" stroke-width="3.1" stroke-linecap="round"/></svg>
<svg style="left:143px;top:231px;" width="24" height="22" viewBox="0 0 24 22"><path d="M3 11.5 L9 18 L21 2.5" fill="none" stroke="#c9c9c9" stroke-width="3.5"/></svg>
<span style="left:194px;top:226.8px;font-family:'Liberation Serif',serif;font-style:italic;font-size:24px;line-height:26px;color:#7e7e7e;-webkit-text-stroke:0.35px #7e7e7e;">fx</span>
<svg style="left:1486px;top:238px;" width="22" height="14" viewBox="0 0 22 14"><path d="M2.8 2.6 L10.6 10.2 L18.4 2.6" fill="none" stroke="#6e6e6e" stroke-width="3.4"/></svg>
<span class="m" style="left:251.10px;top:237.16px;font-size:16.49px;line-height:16.49px;color:#3a3a3a;">= Table.AddIndexColumn(#&quot;Tipo cambiado&quot;, </span>
<span class="m" style="left:656.82px;top:237.16px;font-size:16.49px;line-height:16.49px;color:#a31515;">&quot;Índice&quot;</span>
<span class="m" style="left:735.99px;top:237.16px;font-size:16.49px;line-height:16.49px;color:#3a3a3a;">, </span>
<span class="m" style="left:755.78px;top:237.16px;font-size:16.49px;line-height:16.49px;color:#09885a;">1</span>
<span class="m" style="left:765.67px;top:237.16px;font-size:16.49px;line-height:16.49px;color:#3a3a3a;">, </span>
<span class="m" style="left:785.47px;top:237.16px;font-size:16.49px;line-height:16.49px;color:#09885a;">1</span>
<span class="m" style="left:795.36px;top:237.16px;font-size:16.49px;line-height:16.49px;color:#3a3a3a;">, Int64.Type)</span>
<div style="left:66px;top:270px;width:1358px;height:33px;background:#3d3d3d;"></div>
<div style="left:68px;top:272px;width:41px;height:29px;background:#646464;"></div>
<div style="left:111px;top:272px;width:238px;height:31px;background:#439467;"></div>
<div style="left:351px;top:272px;width:351px;height:30px;background:#646464;"></div>
<div style="left:704px;top:272px;width:238px;height:30px;background:#646464;"></div>
<div style="left:944px;top:272px;width:238px;height:30px;background:#646464;"></div>
<div style="left:1184px;top:272px;width:239px;height:30px;background:#646464;"></div>
<div style="left:66px;top:303px;width:45px;height:6px;background:#3d3d3d;"></div>
<div style="left:68px;top:303px;width:41px;height:4px;background:#646464;"></div>
<div style="left:111px;top:303px;width:1313px;height:6px;background:#13b3a4;"></div>
<div style="left:111px;top:302px;width:239px;height:1px;background:#1f7a5c;"></div>
<div style="left:688px;top:303px;width:15px;height:6px;background:#585858;"></div>
<div style="left:928px;top:303px;width:15px;height:6px;background:#585858;"></div>
<div style="left:1168px;top:303px;width:15px;height:6px;background:#585858;"></div>
<div style="left:349px;top:303px;width:2px;height:6px;background:#bfe8df;"></div>
<div style="left:702px;top:303px;width:2px;height:6px;background:#e8f5f2;"></div>
<div style="left:942px;top:303px;width:2px;height:6px;background:#e8f5f2;"></div>
<div style="left:1182px;top:303px;width:2px;height:6px;background:#e8f5f2;"></div>
<div style="left:110px;top:309px;width:1314px;height:666px;background:#ffffff;"></div>
<div style="left:110px;top:309px;width:240px;height:666px;background:#d5efe2;"></div>
<div style="left:66px;top:309px;width:45px;height:666px;background:#3d3d3d;"></div>
<div style="left:111px;top:309px;width:239px;height:1px;background:#c4f3e6;"></div>
<div style="left:351px;top:309px;width:1073px;height:1px;background:#e9fbf7;"></div>
<svg style="left:66px;top:309px;" width="1358" height="666" viewBox="0 0 1358 666"><rect x="2" y="0.25" width="41" height="29.50" fill="#646464"/><rect x="2" y="31.75" width="41" height="29.50" fill="#646464"/><rect x="44" y="29.75" width="1314" height="2" fill="#d8d8d8"/><rect x="44" y="29.75" width="240" height="2" fill="#cbdcd3"/><rect x="2" y="63.25" width="41" height="29.50" fill="#646464"/><rect x="44" y="61.25" width="1314" height="2" fill="#d8d8d8"/><rect x="44" y="61.25" width="240" height="2" fill="#cbdcd3"/><rect x="2" y="94.75" width="41" height="29.50" fill="#646464"/><rect x="44" y="92.75" width="1314" height="2" fill="#d8d8d8"/><rect x="44" y="92.75" width="240" height="2" fill="#cbdcd3"/><rect x="2" y="126.25" width="41" height="29.50" fill="#646464"/><rect x="44" y="124.25" width="1314" height="2" fill="#d8d8d8"/><rect x="44" y="124.25" width="240" height="2" fill="#cbdcd3"/><rect x="2" y="157.75" width="41" height="29.50" fill="#646464"/><rect x="44" y="155.75" width="1314" height="2" fill="#d8d8d8"/><rect x="44" y="155.75" width="240" height="2" fill="#cbdcd3"/><rect x="2" y="189.25" width="41" height="29.50" fill="#646464"/><rect x="44" y="187.25" width="1314" height="2" fill="#d8d8d8"/><rect x="44" y="187.25" width="240" height="2" fill="#cbdcd3"/><rect x="2" y="220.75" width="41" height="29.50" fill="#646464"/><rect x="44" y="218.75" width="1314" height="2" fill="#d8d8d8"/><rect x="44" y="218.75" width="240" height="2" fill="#cbdcd3"/><rect x="2" y="252.25" width="41" height="29.50" fill="#646464"/><rect x="44" y="250.25" width="1314" height="2" fill="#d8d8d8"/><rect x="44" y="250.25" width="240" height="2" fill="#cbdcd3"/><rect x="2" y="283.75" width="41" height="29.50" fill="#646464"/><rect x="44" y="281.75" width="1314" height="2" fill="#d8d8d8"/><rect x="44" y="281.75" width="240" height="2" fill="#cbdcd3"/><rect x="2" y="315.25" width="41" height="29.50" fill="#646464"/><rect x="44" y="313.25" width="1314" height="2" fill="#d8d8d8"/><rect x="44" y="313.25" width="240" height="2" fill="#cbdcd3"/><rect x="2" y="346.75" width="41" height="29.50" fill="#646464"/><rect x="44" y="344.75" width="1314" height="2" fill="#d8d8d8"/><rect x="44" y="344.75" width="240" height="2" fill="#cbdcd3"/><rect x="2" y="378.25" width="41" height="29.50" fill="#646464"/><rect x="44" y="376.25" width="1314" height="2" fill="#d8d8d8"/><rect x="44" y="376.25" width="240" height="2" fill="#cbdcd3"/><rect x="2" y="409.75" width="41" height="29.50" fill="#646464"/><rect x="44" y="407.75" width="1314" height="2" fill="#d8d8d8"/><rect x="44" y="407.75" width="240" height="2" fill="#cbdcd3"/><rect x="2" y="441.25" width="41" height="29.50" fill="#646464"/><rect x="44" y="439.25" width="1314" height="2" fill="#d8d8d8"/><rect x="44" y="439.25" width="240" height="2" fill="#cbdcd3"/><rect x="2" y="472.75" width="41" height="29.50" fill="#646464"/><rect x="44" y="470.75" width="1314" height="2" fill="#d8d8d8"/><rect x="44" y="470.75" width="240" height="2" fill="#cbdcd3"/><rect x="2" y="504.25" width="41" height="29.50" fill="#646464"/><rect x="44" y="502.25" width="1314" height="2" fill="#d8d8d8"/><rect x="44" y="502.25" width="240" height="2" fill="#cbdcd3"/><rect x="2" y="535.75" width="41" height="29.50" fill="#646464"/><rect x="44" y="533.75" width="1314" height="2" fill="#d8d8d8"/><rect x="44" y="533.75" width="240" height="2" fill="#cbdcd3"/><rect x="2" y="567.25" width="41" height="29.50" fill="#646464"/><rect x="44" y="565.25" width="1314" height="2" fill="#d8d8d8"/><rect x="44" y="565.25" width="240" height="2" fill="#cbdcd3"/><rect x="2" y="598.75" width="41" height="29.50" fill="#646464"/><rect x="44" y="596.75" width="1314" height="2" fill="#d8d8d8"/><rect x="44" y="596.75" width="240" height="2" fill="#cbdcd3"/><rect x="2" y="630.25" width="41" height="29.50" fill="#646464"/><rect x="44" y="628.25" width="1314" height="2" fill="#d8d8d8"/><rect x="44" y="628.25" width="240" height="2" fill="#cbdcd3"/><rect x="2" y="661.75" width="41" height="4.25" fill="#646464"/><rect x="44" y="659.75" width="1314" height="2" fill="#d8d8d8"/><rect x="44" y="659.75" width="240" height="2" fill="#cbdcd3"/></svg>
<div style="left:349px;top:309px;width:2px;height:666px;background:#d8d8d8;"></div>
<div style="left:702px;top:309px;width:2px;height:666px;background:#d8d8d8;"></div>
<div style="left:942px;top:309px;width:2px;height:666px;background:#d8d8d8;"></div>
<div style="left:1182px;top:309px;width:2px;height:666px;background:#d8d8d8;"></div>
<div style="left:1423px;top:309px;width:1px;height:666px;background:#d8d8d8;"></div>
<svg style="left:75px;top:278px;" width="30" height="18" viewBox="0 0 30 18"><rect x="0.7" y="0.9" width="19.5" height="16.2" fill="#ffffff"/><rect x="2.00" y="5.00" width="4.7" height="2.7" fill="#5a5a5a"/><rect x="8.05" y="5.00" width="4.7" height="2.7" fill="#5a5a5a"/><rect x="14.10" y="5.00" width="4.7" height="2.7" fill="#5a5a5a"/><rect x="2.00" y="9.05" width="4.7" height="2.7" fill="#5a5a5a"/><rect x="8.05" y="9.05" width="4.7" height="2.7" fill="#5a5a5a"/><rect x="14.10" y="9.05" width="4.7" height="2.7" fill="#5a5a5a"/><rect x="2.00" y="13.10" width="4.7" height="2.7" fill="#5a5a5a"/><rect x="8.05" y="13.10" width="4.7" height="2.7" fill="#5a5a5a"/><rect x="14.10" y="13.10" width="4.7" height="2.7" fill="#5a5a5a"/><path d="M21 12.6 L28.6 12.6 L24.8 17.1 Z" fill="#ffffff"/></svg>
<span style="left:115.20px;top:279.71px;font-size:14.4px;line-height:14.4px;color:#f4fbf7;-webkit-text-stroke:0.3px #f4fbf7;transform-origin:0 0;transform:scaleX(0.9);">A</span>
<span style="left:122.70px;top:276.89px;font-size:13.6px;line-height:13.6px;color:#f4fbf7;-webkit-text-stroke:0.3px #f4fbf7;transform-origin:0 0;transform:scaleX(0.84);">B</span>
<span style="left:129.30px;top:283.11px;font-size:14.4px;line-height:14.4px;color:#f4fbf7;-webkit-text-stroke:0.3px #f4fbf7;transform-origin:0 0;transform:scaleX(0.82);">C</span>
<span style="left:147.70px;top:280.00px;font-size:15px;line-height:15px;color:#ffffff;letter-spacing:0.239px;font-weight:700;">Column1</span>
<div style="left:323.5px;top:276px;width:23px;height:23px;background:#ffffff;"></div>
<svg style="left:329.7px;top:283.8px;" width="11" height="7" viewBox="0 0 11 7"><path d="M0.2 0.3 L10.6 0.3 L5.4 5.8 Z" fill="#5c5c5c"/></svg>
<span style="left:354.50px;top:279.71px;font-size:14.4px;line-height:14.4px;color:#f4fbf7;-webkit-text-stroke:0.3px #f4fbf7;transform-origin:0 0;transform:scaleX(0.9);">A</span>
<span style="left:362.00px;top:276.89px;font-size:13.6px;line-height:13.6px;color:#f4fbf7;-webkit-text-stroke:0.3px #f4fbf7;transform-origin:0 0;transform:scaleX(0.84);">B</span>
<span style="left:368.60px;top:283.11px;font-size:14.4px;line-height:14.4px;color:#f4fbf7;-webkit-text-stroke:0.3px #f4fbf7;transform-origin:0 0;transform:scaleX(0.82);">C</span>
<span style="left:387.30px;top:280.00px;font-size:15px;line-height:15px;color:#ffffff;letter-spacing:0.305px;font-weight:700;">Column2</span>
<div style="left:675.5px;top:276px;width:23px;height:23px;background:#ffffff;"></div>
<svg style="left:681.7px;top:283.8px;" width="11" height="7" viewBox="0 0 11 7"><path d="M0.2 0.3 L10.6 0.3 L5.4 5.8 Z" fill="#5c5c5c"/></svg>
<span style="left:707.80px;top:279.71px;font-size:14.4px;line-height:14.4px;color:#f4fbf7;-webkit-text-stroke:0.3px #f4fbf7;transform-origin:0 0;transform:scaleX(0.9);">A</span>
<span style="left:715.30px;top:276.89px;font-size:13.6px;line-height:13.6px;color:#f4fbf7;-webkit-text-stroke:0.3px #f4fbf7;transform-origin:0 0;transform:scaleX(0.84);">B</span>
<span style="left:721.90px;top:283.11px;font-size:14.4px;line-height:14.4px;color:#f4fbf7;-webkit-text-stroke:0.3px #f4fbf7;transform-origin:0 0;transform:scaleX(0.82);">C</span>
<span style="left:740.00px;top:280.00px;font-size:15px;line-height:15px;color:#ffffff;letter-spacing:0.255px;font-weight:700;">Column3</span>
<div style="left:915.5px;top:276px;width:23px;height:23px;background:#ffffff;"></div>
<svg style="left:921.7px;top:283.8px;" width="11" height="7" viewBox="0 0 11 7"><path d="M0.2 0.3 L10.6 0.3 L5.4 5.8 Z" fill="#5c5c5c"/></svg>
<span style="left:947.80px;top:279.71px;font-size:14.4px;line-height:14.4px;color:#f4fbf7;-webkit-text-stroke:0.3px #f4fbf7;transform-origin:0 0;transform:scaleX(0.9);">A</span>
<span style="left:955.30px;top:276.89px;font-size:13.6px;line-height:13.6px;color:#f4fbf7;-webkit-text-stroke:0.3px #f4fbf7;transform-origin:0 0;transform:scaleX(0.84);">B</span>
<span style="left:961.90px;top:283.11px;font-size:14.4px;line-height:14.4px;color:#f4fbf7;-webkit-text-stroke:0.3px #f4fbf7;transform-origin:0 0;transform:scaleX(0.82);">C</span>
<span style="left:979.30px;top:280.00px;font-size:15px;line-height:15px;color:#ffffff;letter-spacing:0.422px;font-weight:700;">Column4</span>
<div style="left:1155.5px;top:276px;width:23px;height:23px;background:#ffffff;"></div>
<svg style="left:1161.7px;top:283.8px;" width="11" height="7" viewBox="0 0 11 7"><path d="M0.2 0.3 L10.6 0.3 L5.4 5.8 Z" fill="#5c5c5c"/></svg>
<span style="left:1186.90px;top:281.11px;font-size:14.4px;line-height:14.4px;color:#f6f6f6;">1</span>
<span style="left:1194.90px;top:275.78px;font-size:15.5px;line-height:15.5px;color:#f6f6f6;transform-origin:0 0;transform:scaleX(0.92);">2</span>
<span style="left:1202.20px;top:283.95px;font-size:14px;line-height:14px;color:#f6f6f6;transform-origin:0 0;transform:scaleX(0.94);">3</span>
<span style="left:1219.60px;top:280.20px;font-size:15px;line-height:15px;color:#ffffff;letter-spacing:0.251px;font-weight:700;">Índice</span>
<div style="left:1395.5px;top:276px;width:23px;height:23px;background:#ffffff;"></div>
<svg style="left:1401.7px;top:283.8px;" width="11" height="7" viewBox="0 0 11 7"><path d="M0.2 0.3 L10.6 0.3 L5.4 5.8 Z" fill="#5c5c5c"/></svg>
<span style="left:83.43px;top:316.69px;font-size:17.5px;line-height:17.5px;color:#f2f2f2;">1</span>
<span style="left:115.40px;top:317.25px;font-size:15.3px;line-height:15.3px;color:#31413a;letter-spacing:0.203px;-webkit-text-stroke:0.2px;">English</span>
<span style="left:355.40px;top:317.25px;font-size:15.3px;line-height:15.3px;color:#353535;letter-spacing:0.135px;-webkit-text-stroke:0.2px;">Spanish</span>
<span style="left:708.40px;top:317.25px;font-size:15.3px;line-height:15.3px;color:#353535;letter-spacing:0.753px;-webkit-text-stroke:0.2px;">Pronunciation</span>
<span style="left:948.40px;top:317.25px;font-size:15.3px;line-height:15.3px;color:#353535;letter-spacing:0.356px;-webkit-text-stroke:0.2px;">Level</span>
<span style="left:1408.91px;top:316.83px;font-size:15.8px;line-height:15.8px;color:#353535;font-style:italic;">1</span>
<span style="left:83.43px;top:348.19px;font-size:17.5px;line-height:17.5px;color:#f2f2f2;">2</span>
<span style="left:115.40px;top:348.75px;font-size:15.3px;line-height:15.3px;color:#31413a;letter-spacing:0.997px;-webkit-text-stroke:0.2px;">Algorithm</span>
<span style="left:355.40px;top:348.75px;font-size:15.3px;line-height:15.3px;color:#353535;letter-spacing:1.034px;-webkit-text-stroke:0.2px;">Algoritmo</span>
<span style="left:708.40px;top:348.75px;font-size:15.3px;line-height:15.3px;color:#353535;letter-spacing:0.701px;-webkit-text-stroke:0.2px;">ál-go-ri-dhem</span>
<span style="left:948.40px;top:348.75px;font-size:15.3px;line-height:15.3px;color:#353535;letter-spacing:0.075px;-webkit-text-stroke:0.2px;">Básico</span>
<span style="left:1408.91px;top:348.33px;font-size:15.8px;line-height:15.8px;color:#353535;font-style:italic;">2</span>
<span style="left:83.43px;top:379.69px;font-size:17.5px;line-height:17.5px;color:#f2f2f2;">3</span>
<span style="left:115.40px;top:380.25px;font-size:15.3px;line-height:15.3px;color:#31413a;letter-spacing:0.610px;-webkit-text-stroke:0.2px;">Anchor (tag)</span>
<span style="left:355.40px;top:380.25px;font-size:15.3px;line-height:15.3px;color:#353535;letter-spacing:0.533px;-webkit-text-stroke:0.2px;">Etiqueta ancla</span>
<span style="left:708.40px;top:380.25px;font-size:15.3px;line-height:15.3px;color:#353535;letter-spacing:0.606px;-webkit-text-stroke:0.2px;">án-ker</span>
<span style="left:948.40px;top:380.25px;font-size:15.3px;line-height:15.3px;color:#353535;letter-spacing:0.075px;-webkit-text-stroke:0.2px;">Básico</span>
<span style="left:1408.91px;top:379.83px;font-size:15.8px;line-height:15.8px;color:#353535;font-style:italic;">3</span>
<span style="left:83.43px;top:411.19px;font-size:17.5px;line-height:17.5px;color:#f2f2f2;">4</span>
<span style="left:115.40px;top:411.75px;font-size:15.3px;line-height:15.3px;color:#31413a;letter-spacing:0.944px;-webkit-text-stroke:0.2px;">Android</span>
<span style="left:355.40px;top:411.75px;font-size:15.3px;line-height:15.3px;color:#353535;letter-spacing:0.894px;-webkit-text-stroke:0.2px;">Android</span>
<span style="left:708.40px;top:411.75px;font-size:15.3px;line-height:15.3px;color:#353535;letter-spacing:0.787px;-webkit-text-stroke:0.2px;">án-droyd</span>
<span style="left:948.40px;top:411.75px;font-size:15.3px;line-height:15.3px;color:#353535;letter-spacing:0.075px;-webkit-text-stroke:0.2px;">Básico</span>
<span style="left:1408.91px;top:411.33px;font-size:15.8px;line-height:15.8px;color:#353535;font-style:italic;">4</span>
<span style="left:83.43px;top:442.69px;font-size:17.5px;line-height:17.5px;color:#f2f2f2;">5</span>
<span style="left:115.40px;top:443.25px;font-size:15.3px;line-height:15.3px;color:#31413a;letter-spacing:-0.381px;-webkit-text-stroke:0.2px;">API</span>
<span style="left:355.40px;top:443.25px;font-size:15.3px;line-height:15.3px;color:#353535;letter-spacing:0.546px;-webkit-text-stroke:0.2px;">Interfaz de programación de aplicaciones</span>
<span style="left:708.40px;top:443.25px;font-size:15.3px;line-height:15.3px;color:#353535;letter-spacing:0.597px;-webkit-text-stroke:0.2px;">éi-pi-ái</span>
<span style="left:948.40px;top:443.25px;font-size:15.3px;line-height:15.3px;color:#353535;letter-spacing:0.075px;-webkit-text-stroke:0.2px;">Básico</span>
<span style="left:1408.91px;top:442.83px;font-size:15.8px;line-height:15.8px;color:#353535;font-style:italic;">5</span>
<span style="left:83.43px;top:474.19px;font-size:17.5px;line-height:17.5px;color:#f2f2f2;">6</span>
<span style="left:115.40px;top:474.75px;font-size:15.3px;line-height:15.3px;color:#31413a;letter-spacing:1.088px;-webkit-text-stroke:0.2px;">App</span>
<span style="left:355.40px;top:474.75px;font-size:15.3px;line-height:15.3px;color:#353535;letter-spacing:0.573px;-webkit-text-stroke:0.2px;">Aplicación</span>
<span style="left:708.40px;top:474.75px;font-size:15.3px;line-height:15.3px;color:#353535;letter-spacing:0.581px;-webkit-text-stroke:0.2px;">áp</span>
<span style="left:948.40px;top:474.75px;font-size:15.3px;line-height:15.3px;color:#353535;letter-spacing:0.075px;-webkit-text-stroke:0.2px;">Básico</span>
<span style="left:1408.91px;top:474.33px;font-size:15.8px;line-height:15.8px;color:#353535;font-style:italic;">6</span>
<span style="left:83.43px;top:505.69px;font-size:17.5px;line-height:17.5px;color:#f2f2f2;">7</span>
<span style="left:115.40px;top:506.25px;font-size:15.3px;line-height:15.3px;color:#31413a;letter-spacing:1.009px;-webkit-text-stroke:0.2px;">Argument</span>
<span style="left:355.40px;top:506.25px;font-size:15.3px;line-height:15.3px;color:#353535;letter-spacing:1.007px;-webkit-text-stroke:0.2px;">Argumento</span>
<span style="left:708.40px;top:506.25px;font-size:15.3px;line-height:15.3px;color:#353535;letter-spacing:0.833px;-webkit-text-stroke:0.2px;">ár-guiu-ment</span>
<span style="left:948.40px;top:506.25px;font-size:15.3px;line-height:15.3px;color:#353535;letter-spacing:0.075px;-webkit-text-stroke:0.2px;">Básico</span>
<span style="left:1408.91px;top:505.83px;font-size:15.8px;line-height:15.8px;color:#353535;font-style:italic;">7</span>
<span style="left:83.43px;top:537.19px;font-size:17.5px;line-height:17.5px;color:#f2f2f2;">8</span>
<span style="left:115.40px;top:537.75px;font-size:15.3px;line-height:15.3px;color:#31413a;letter-spacing:0.886px;-webkit-text-stroke:0.2px;">Array</span>
<span style="left:355.40px;top:537.75px;font-size:15.3px;line-height:15.3px;color:#353535;letter-spacing:0.858px;-webkit-text-stroke:0.2px;">Arreglo / Matriz</span>
<span style="left:708.40px;top:537.75px;font-size:15.3px;line-height:15.3px;color:#353535;letter-spacing:0.698px;-webkit-text-stroke:0.2px;">a-réi</span>
<span style="left:948.40px;top:537.75px;font-size:15.3px;line-height:15.3px;color:#353535;letter-spacing:0.075px;-webkit-text-stroke:0.2px;">Básico</span>
<span style="left:1408.91px;top:537.33px;font-size:15.8px;line-height:15.8px;color:#353535;font-style:italic;">8</span>
<span style="left:83.43px;top:568.69px;font-size:17.5px;line-height:17.5px;color:#f2f2f2;">9</span>
<span style="left:115.40px;top:569.25px;font-size:15.3px;line-height:15.3px;color:#31413a;letter-spacing:-0.715px;-webkit-text-stroke:0.2px;">ASCII</span>
<span style="left:355.40px;top:569.25px;font-size:15.3px;line-height:15.3px;color:#353535;letter-spacing:-0.765px;-webkit-text-stroke:0.2px;">ASCII</span>
<span style="left:708.40px;top:569.25px;font-size:15.3px;line-height:15.3px;color:#353535;letter-spacing:0.199px;-webkit-text-stroke:0.2px;">ás-ki</span>
<span style="left:948.40px;top:569.25px;font-size:15.3px;line-height:15.3px;color:#353535;letter-spacing:0.075px;-webkit-text-stroke:0.2px;">Básico</span>
<span style="left:1408.91px;top:568.83px;font-size:15.8px;line-height:15.8px;color:#353535;font-style:italic;">9</span>
<span style="left:78.57px;top:600.19px;font-size:17.5px;line-height:17.5px;color:#f2f2f2;">10</span>
<span style="left:115.40px;top:600.75px;font-size:15.3px;line-height:15.3px;color:#31413a;letter-spacing:0.933px;-webkit-text-stroke:0.2px;">Authentication</span>
<span style="left:355.40px;top:600.75px;font-size:15.3px;line-height:15.3px;color:#353535;letter-spacing:0.770px;-webkit-text-stroke:0.2px;">Autenticación</span>
<span style="left:708.40px;top:600.75px;font-size:15.3px;line-height:15.3px;color:#353535;letter-spacing:0.713px;-webkit-text-stroke:0.2px;">ao-thén-ti-kéi-shon</span>
<span style="left:948.40px;top:600.75px;font-size:15.3px;line-height:15.3px;color:#353535;letter-spacing:0.075px;-webkit-text-stroke:0.2px;">Básico</span>
<span style="left:1400.12px;top:600.33px;font-size:15.8px;line-height:15.8px;color:#353535;font-style:italic;">10</span>
<span style="left:79.22px;top:631.69px;font-size:17.5px;line-height:17.5px;color:#f2f2f2;">11</span>
<span style="left:115.40px;top:632.25px;font-size:15.3px;line-height:15.3px;color:#31413a;letter-spacing:0.899px;-webkit-text-stroke:0.2px;">Authorization</span>
<span style="left:355.40px;top:632.25px;font-size:15.3px;line-height:15.3px;color:#353535;letter-spacing:0.700px;-webkit-text-stroke:0.2px;">Autorización</span>
<span style="left:708.40px;top:632.25px;font-size:15.3px;line-height:15.3px;color:#353535;letter-spacing:0.600px;-webkit-text-stroke:0.2px;">ao-the-ri-zéi-shon</span>
<span style="left:948.40px;top:632.25px;font-size:15.3px;line-height:15.3px;color:#353535;letter-spacing:0.075px;-webkit-text-stroke:0.2px;">Básico</span>
<span style="left:1401.30px;top:631.83px;font-size:15.8px;line-height:15.8px;color:#353535;font-style:italic;">11</span>
<span style="left:78.57px;top:663.19px;font-size:17.5px;line-height:17.5px;color:#f2f2f2;">12</span>
<span style="left:115.40px;top:663.75px;font-size:15.3px;line-height:15.3px;color:#31413a;letter-spacing:0.473px;-webkit-text-stroke:0.2px;">Backup</span>
<span style="left:355.40px;top:663.75px;font-size:15.3px;line-height:15.3px;color:#353535;letter-spacing:0.394px;-webkit-text-stroke:0.2px;">Copia de seguridad</span>
<span style="left:708.40px;top:663.75px;font-size:15.3px;line-height:15.3px;color:#353535;letter-spacing:0.523px;-webkit-text-stroke:0.2px;">bá-kap</span>
<span style="left:948.40px;top:663.75px;font-size:15.3px;line-height:15.3px;color:#353535;letter-spacing:0.075px;-webkit-text-stroke:0.2px;">Básico</span>
<span style="left:1400.12px;top:663.33px;font-size:15.8px;line-height:15.8px;color:#353535;font-style:italic;">12</span>
<span style="left:78.57px;top:694.69px;font-size:17.5px;line-height:17.5px;color:#f2f2f2;">13</span>
<span style="left:115.40px;top:695.25px;font-size:15.3px;line-height:15.3px;color:#31413a;letter-spacing:0.993px;-webkit-text-stroke:0.2px;">Bandwidth</span>
<span style="left:355.40px;top:695.25px;font-size:15.3px;line-height:15.3px;color:#353535;letter-spacing:0.535px;-webkit-text-stroke:0.2px;">Ancho de banda</span>
<span style="left:708.40px;top:695.25px;font-size:15.3px;line-height:15.3px;color:#353535;letter-spacing:0.770px;-webkit-text-stroke:0.2px;">bánd-widz</span>
<span style="left:948.40px;top:695.25px;font-size:15.3px;line-height:15.3px;color:#353535;letter-spacing:0.075px;-webkit-text-stroke:0.2px;">Básico</span>
<span style="left:1400.12px;top:694.83px;font-size:15.8px;line-height:15.8px;color:#353535;font-style:italic;">13</span>
<span style="left:78.57px;top:726.19px;font-size:17.5px;line-height:17.5px;color:#f2f2f2;">14</span>
<span style="left:115.40px;top:726.75px;font-size:15.3px;line-height:15.3px;color:#31413a;letter-spacing:-0.091px;-webkit-text-stroke:0.2px;">Bash</span>
<span style="left:355.40px;top:726.75px;font-size:15.3px;line-height:15.3px;color:#353535;letter-spacing:0.256px;-webkit-text-stroke:0.2px;">Bash (shell)</span>
<span style="left:708.40px;top:726.75px;font-size:15.3px;line-height:15.3px;color:#353535;letter-spacing:0.407px;-webkit-text-stroke:0.2px;">básh</span>
<span style="left:948.40px;top:726.75px;font-size:15.3px;line-height:15.3px;color:#353535;letter-spacing:0.075px;-webkit-text-stroke:0.2px;">Básico</span>
<span style="left:1400.12px;top:726.33px;font-size:15.8px;line-height:15.8px;color:#353535;font-style:italic;">14</span>
<span style="left:78.57px;top:757.69px;font-size:17.5px;line-height:17.5px;color:#f2f2f2;">15</span>
<span style="left:115.40px;top:758.25px;font-size:15.3px;line-height:15.3px;color:#31413a;letter-spacing:0.652px;-webkit-text-stroke:0.2px;">Benchmark</span>
<span style="left:355.40px;top:758.25px;font-size:15.3px;line-height:15.3px;color:#353535;letter-spacing:0.715px;-webkit-text-stroke:0.2px;">Prueba de rendimiento</span>
<span style="left:708.40px;top:758.25px;font-size:15.3px;line-height:15.3px;color:#353535;letter-spacing:0.757px;-webkit-text-stroke:0.2px;">bénch-mark</span>
<span style="left:948.40px;top:758.25px;font-size:15.3px;line-height:15.3px;color:#353535;letter-spacing:0.075px;-webkit-text-stroke:0.2px;">Básico</span>
<span style="left:1400.12px;top:757.83px;font-size:15.8px;line-height:15.8px;color:#353535;font-style:italic;">15</span>
<span style="left:78.57px;top:789.19px;font-size:17.5px;line-height:17.5px;color:#f2f2f2;">16</span>
<span style="left:115.40px;top:789.75px;font-size:15.3px;line-height:15.3px;color:#31413a;letter-spacing:0.566px;-webkit-text-stroke:0.2px;">Binary</span>
<span style="left:355.40px;top:789.75px;font-size:15.3px;line-height:15.3px;color:#353535;letter-spacing:0.695px;-webkit-text-stroke:0.2px;">Binario</span>
<span style="left:708.40px;top:789.75px;font-size:15.3px;line-height:15.3px;color:#353535;letter-spacing:0.610px;-webkit-text-stroke:0.2px;">bái-na-ri</span>
<span style="left:948.40px;top:789.75px;font-size:15.3px;line-height:15.3px;color:#353535;letter-spacing:0.075px;-webkit-text-stroke:0.2px;">Básico</span>
<span style="left:1400.12px;top:789.33px;font-size:15.8px;line-height:15.8px;color:#353535;font-style:italic;">16</span>
<span style="left:78.57px;top:820.69px;font-size:17.5px;line-height:17.5px;color:#f2f2f2;">17</span>
<span style="left:115.40px;top:821.25px;font-size:15.3px;line-height:15.3px;color:#31413a;letter-spacing:1.272px;-webkit-text-stroke:0.2px;">Bit</span>
<span style="left:355.40px;top:821.25px;font-size:15.3px;line-height:15.3px;color:#353535;letter-spacing:1.272px;-webkit-text-stroke:0.2px;">Bit</span>
<span style="left:708.40px;top:821.25px;font-size:15.3px;line-height:15.3px;color:#353535;letter-spacing:1.520px;-webkit-text-stroke:0.2px;">bit</span>
<span style="left:948.40px;top:821.25px;font-size:15.3px;line-height:15.3px;color:#353535;letter-spacing:0.075px;-webkit-text-stroke:0.2px;">Básico</span>
<span style="left:1400.12px;top:820.83px;font-size:15.8px;line-height:15.8px;color:#353535;font-style:italic;">17</span>
<span style="left:78.57px;top:852.19px;font-size:17.5px;line-height:17.5px;color:#f2f2f2;">18</span>
<span style="left:115.40px;top:852.75px;font-size:15.3px;line-height:15.3px;color:#31413a;letter-spacing:0.456px;-webkit-text-stroke:0.2px;">Blockchain</span>
<span style="left:355.40px;top:852.75px;font-size:15.3px;line-height:15.3px;color:#353535;letter-spacing:0.405px;-webkit-text-stroke:0.2px;">Cadena de bloques</span>
<span style="left:708.40px;top:852.75px;font-size:15.3px;line-height:15.3px;color:#353535;letter-spacing:0.651px;-webkit-text-stroke:0.2px;">blók-chein</span>
<span style="left:948.40px;top:852.75px;font-size:15.3px;line-height:15.3px;color:#353535;letter-spacing:0.075px;-webkit-text-stroke:0.2px;">Básico</span>
<span style="left:1400.12px;top:852.33px;font-size:15.8px;line-height:15.8px;color:#353535;font-style:italic;">18</span>
<span style="left:78.57px;top:883.69px;font-size:17.5px;line-height:17.5px;color:#f2f2f2;">19</span>
<span style="left:115.40px;top:884.25px;font-size:15.3px;line-height:15.3px;color:#31413a;letter-spacing:0.591px;-webkit-text-stroke:0.2px;">Boolean</span>
<span style="left:355.40px;top:884.25px;font-size:15.3px;line-height:15.3px;color:#353535;letter-spacing:0.663px;-webkit-text-stroke:0.2px;">Booleano</span>
<span style="left:708.40px;top:884.25px;font-size:15.3px;line-height:15.3px;color:#353535;letter-spacing:0.682px;-webkit-text-stroke:0.2px;">bú-li-an</span>
<span style="left:948.40px;top:884.25px;font-size:15.3px;line-height:15.3px;color:#353535;letter-spacing:0.075px;-webkit-text-stroke:0.2px;">Básico</span>
<span style="left:1400.12px;top:883.83px;font-size:15.8px;line-height:15.8px;color:#353535;font-style:italic;">19</span>
<span style="left:78.57px;top:915.19px;font-size:17.5px;line-height:17.5px;color:#f2f2f2;">20</span>
<span style="left:115.40px;top:915.75px;font-size:15.3px;line-height:15.3px;color:#31413a;letter-spacing:0.484px;-webkit-text-stroke:0.2px;">Branch</span>
<span style="left:355.40px;top:915.75px;font-size:15.3px;line-height:15.3px;color:#353535;letter-spacing:0.162px;-webkit-text-stroke:0.2px;">Rama</span>
<span style="left:708.40px;top:915.75px;font-size:15.3px;line-height:15.3px;color:#353535;letter-spacing:0.663px;-webkit-text-stroke:0.2px;">bránch</span>
<span style="left:948.40px;top:915.75px;font-size:15.3px;line-height:15.3px;color:#353535;letter-spacing:0.075px;-webkit-text-stroke:0.2px;">Básico</span>
<span style="left:1400.12px;top:915.33px;font-size:15.8px;line-height:15.8px;color:#353535;font-style:italic;">20</span>
<span style="left:78.57px;top:946.69px;font-size:17.5px;line-height:17.5px;color:#f2f2f2;">21</span>
<span style="left:115.40px;top:947.25px;font-size:15.3px;line-height:15.3px;color:#31413a;letter-spacing:0.784px;-webkit-text-stroke:0.2px;">Breakpoint</span>
<span style="left:355.40px;top:947.25px;font-size:15.3px;line-height:15.3px;color:#353535;letter-spacing:0.762px;-webkit-text-stroke:0.2px;">Punto de interrupción</span>
<span style="left:708.40px;top:947.25px;font-size:15.3px;line-height:15.3px;color:#353535;letter-spacing:0.891px;-webkit-text-stroke:0.2px;">bréik-poynt</span>
<span style="left:948.40px;top:947.25px;font-size:15.3px;line-height:15.3px;color:#353535;letter-spacing:0.075px;-webkit-text-stroke:0.2px;">Básico</span>
<span style="left:1400.12px;top:946.83px;font-size:15.8px;line-height:15.8px;color:#353535;font-style:italic;">21</span>
<div style="left:1490px;top:309px;width:25px;height:666px;background:#f0f0f0;"></div>
<div style="left:1491px;top:360px;width:23px;height:237px;background:#cbcbcb;"></div>
<svg style="left:1493px;top:333px;" width="19" height="17" viewBox="0 0 19 17"><polygon points="9.4,1.9 17.8,9.9 17.8,15.6 9.4,7.8 1.1,15.6 1.1,9.9" fill="#585858"/></svg>
<svg style="left:1492px;top:935px;" width="20" height="16" viewBox="0 0 20 16"><polygon points="10.4,14.7 18.9,6.6 18.9,1.4 10.4,8.8 1.9,1.4 1.9,6.6" fill="#585858"/></svg>
<span style="left:1543.60px;top:236.36px;font-size:31px;line-height:31px;color:#ececec;letter-spacing:-1.326px;-webkit-text-stroke:1px #666666;">Configuración de la co...</span>
<svg style="left:1862px;top:242px;" width="20" height="20" viewBox="0 0 20 20"><path d="M2 2 L18 18 M18 2 L2 18" fill="none" stroke="#f0f0f0" stroke-width="1.7"/></svg>
<svg style="left:1537px;top:303px;" width="11" height="11" viewBox="0 0 11 11"><path d="M10 0.5 L10 10 L0.5 10 Z" fill="#f4f4f4"/></svg>
<span style="left:1557.30px;top:300.73px;font-size:17.8px;line-height:17.8px;color:#ffffff;letter-spacing:-0.858px;font-weight:700;">PROPIEDADES</span>
<span style="left:1557.50px;top:331.19px;font-size:17.5px;line-height:17.5px;color:#f2f2f2;letter-spacing:0.551px;">Nombre</span>
<div style="left:1558px;top:353px;width:326px;height:32px;background:#d6d6d6;border:1px solid #474747;box-sizing:border-box;box-shadow:inset 1px 1px 0 #bdbdbd;"></div>
<span style="left:1566.70px;top:363.19px;font-size:17.5px;line-height:17.5px;color:#262626;letter-spacing:-0.207px;-webkit-text-stroke:0.22px #d6d6d6;">VocabularioTecnologia</span>
<span style="left:1557.50px;top:401.79px;font-size:17.5px;line-height:17.5px;color:#f2f2f2;letter-spacing:0.069px;">Todas las propiedades</span>
<svg style="left:1537px;top:456px;" width="11" height="11" viewBox="0 0 11 11"><path d="M10 0.5 L10 10 L0.5 10 Z" fill="#f4f4f4"/></svg>
<span style="left:1557.30px;top:452.93px;font-size:17.8px;line-height:17.8px;color:#ffffff;letter-spacing:-0.579px;font-weight:700;">PASOS APLICADOS</span>
<div style="left:1558px;top:480px;width:326px;height:464px;background:#d5d5d5;border:1px solid #3e3e3e;border-top:2px solid #3e3e3e;box-sizing:border-box;"></div>
<span style="left:1589.00px;top:490.19px;font-size:17.5px;line-height:17.5px;color:#1e1e1e;letter-spacing:0.195px;">Origen</span>
<span style="left:1589.00px;top:520.19px;font-size:17.5px;line-height:17.5px;color:#1e1e1e;letter-spacing:0.238px;">Tipo cambiado</span>
<div style="left:1559px;top:542px;width:324px;height:30px;background:#439467;"></div>
<span style="left:1589.00px;top:549.79px;font-size:17.5px;line-height:17.5px;color:#ffffff;letter-spacing:0.213px;">Índice agregado</span>
<svg style="left:1566px;top:550px;" width="17" height="15" viewBox="0 0 17 15"><path d="M2 1.5 L15 13.5 M15 1.5 L2 13.5" fill="none" stroke="#ffffff" stroke-width="1.9"/></svg>
<svg style="left:1854.8px;top:488.5px;" width="16" height="16" viewBox="0 0 16 16"><path d="M12.60 8.00 L15.60 8.00 M10.30 11.98 L11.80 14.58 M5.70 11.98 L4.20 14.58 M3.40 8.00 L0.40 8.00 M5.70 4.02 L4.20 1.42 M10.30 4.02 L11.80 1.42 " stroke="#bbbbbb" stroke-width="3.2" fill="none"/><circle cx="8" cy="8" r="4.1" fill="none" stroke="#bbbbbb" stroke-width="2.6"/></svg>
<svg style="left:1854.8px;top:548.7px;" width="16" height="16" viewBox="0 0 16 16"><path d="M12.60 8.00 L15.60 8.00 M10.30 11.98 L11.80 14.58 M5.70 11.98 L4.20 14.58 M3.40 8.00 L0.40 8.00 M5.70 4.02 L4.20 1.42 M10.30 4.02 L11.80 1.42 " stroke="#b2d2c1" stroke-width="3.2" fill="none"/><circle cx="8" cy="8" r="4.1" fill="none" stroke="#b2d2c1" stroke-width="2.6"/></svg>
<svg style="left:1570px;top:855px;" width="350" height="120" viewBox="0 0 350 120"><path d="M77.0 90.3 L60.3 107.0 L18.5 58.5 L60.3 18.0 L91.8 49.5 L67.8 73.5" fill="none" stroke="#a9d24a" stroke-opacity="0.12" stroke-width="13.5" stroke-linejoin="round" stroke-linecap="round"/><text x="118" y="90" font-family="Liberation Sans, sans-serif" font-size="80" fill="#1e2a33" stroke="#1e2a33" stroke-width="1.6" opacity="0.07" textLength="212" lengthAdjust="spacingAndGlyphs">Platzi</text></svg>
</div></body></html>
